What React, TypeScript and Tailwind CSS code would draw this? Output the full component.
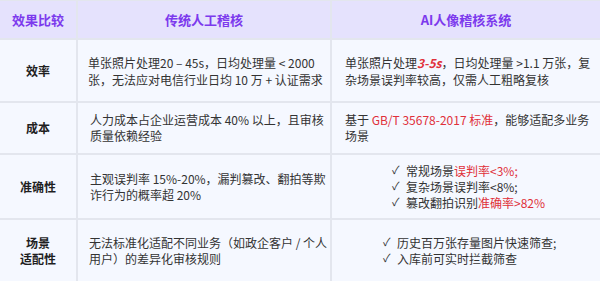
import React from "react";

const font = { fontFamily: '"Noto Sans CJK SC", "Noto Sans", sans-serif' };

const Red: React.FC<{ children: React.ReactNode }> = ({ children }) => (
  <span className="text-[#e0303a]">{children}</span>
);

const Check: React.FC<{ children: React.ReactNode }> = ({ children }) => (
  <div className="flex items-center whitespace-nowrap">
    <span className="w-[14px] shrink-0 text-[11px] leading-none -mt-[3px]">✓</span>
    <span>{children}</span>
  </div>
);

const Label: React.FC<{ children: React.ReactNode }> = ({ children }) => (
  <div className="bg-[#f5f8ff] flex flex-col items-center justify-center text-[12px] font-bold text-[#1f1f1f] leading-[16px]">
    {children}
  </div>
);

const Cell: React.FC<{ children: React.ReactNode; className?: string }> = ({
  children,
  className = "",
}) => (
  <div
    className={
      "bg-[#f5f8ff] flex flex-col justify-center text-[12px] text-[#333] whitespace-nowrap " +
      className
    }
  >
    {children}
  </div>
);

export default function App() {
  return (
    <div className="w-[600px] h-[281px] overflow-hidden bg-white" style={font}>
      <div className="grid grid-cols-[76px_252px_268px] grid-rows-[37px_61px_50px_63px_61px] gap-[2px] bg-[#e3e6ee] pt-px">
        {/* header */}
        <div className="bg-[#e5e2fd] flex items-center justify-center text-[13px] font-bold text-[#7c3aed]">
          效果比较
        </div>
        <div className="bg-[#e5e2fd] flex items-center justify-center text-[13px] font-bold text-[#7c3aed]">
          传统人工稽核
        </div>
        <div className="bg-[#e5e2fd] flex items-center justify-center text-[13px] font-bold text-[#7c3aed]">
          AI人像稽核系统
        </div>

        {/* 效率 */}
        <Label>效率</Label>
        <Cell className="pl-[10px] leading-[17px]">
          <div>单张照片处理20 – 45s，日均处理量 &lt; 2000</div>
          <div>张，无法应对电信行业日均 10 万 + 认证需求</div>
        </Cell>
        <Cell className="pl-[13px] leading-[17px]">
          <div>
            单张照片处理<span className="text-[#e0303a] font-bold italic">3-5s</span>，日均处理量 &gt;1.1 万张，复
          </div>
          <div>杂场景误判率较高，仅需人工粗略复核</div>
        </Cell>

        {/* 成本 */}
        <Label>成本</Label>
        <Cell className="pl-[12px] leading-[16px]">
          <div>人力成本占企业运营成本 40% 以上，且审核</div>
          <div>质量依赖经验</div>
        </Cell>
        <Cell className="pl-[13px] leading-[16px]">
          <div>
            基于 <Red>GB/T 35678-2017 标准</Red>，能够适配多业务
          </div>
          <div>场景</div>
        </Cell>

        {/* 准确性 */}
        <Label>准确性</Label>
        <Cell className="pl-[12px] leading-[16px]">
          <div>主观误判率 15%-20%，漏判篡改、翻拍等欺</div>
          <div>诈行为的概率超 20%</div>
        </Cell>
        <Cell className="pl-[60px] leading-[16px]">
          <Check>
            常规场景<Red>误判率&lt;3%;</Red>
          </Check>
          <Check>复杂场景误判率&lt;8%;</Check>
          <Check>
            篡改翻拍识别<Red>准确率&gt;82%</Red>
          </Check>
        </Cell>

        {/* 场景适配性 */}
        <Label>
          <div>场景</div>
          <div>适配性</div>
        </Label>
        <Cell className="pl-[11px] leading-[16px]">
          <div>无法标准化适配不同业务（如政企客户 / 个人</div>
          <div>用户）的差异化审核规则</div>
        </Cell>
        <Cell className="pl-[51px] leading-[16px]">
          <Check>历史百万张存量图片快速筛查;</Check>
          <Check>入库前可实时拦截筛查</Check>
        </Cell>
      </div>
    </div>
  );
}
